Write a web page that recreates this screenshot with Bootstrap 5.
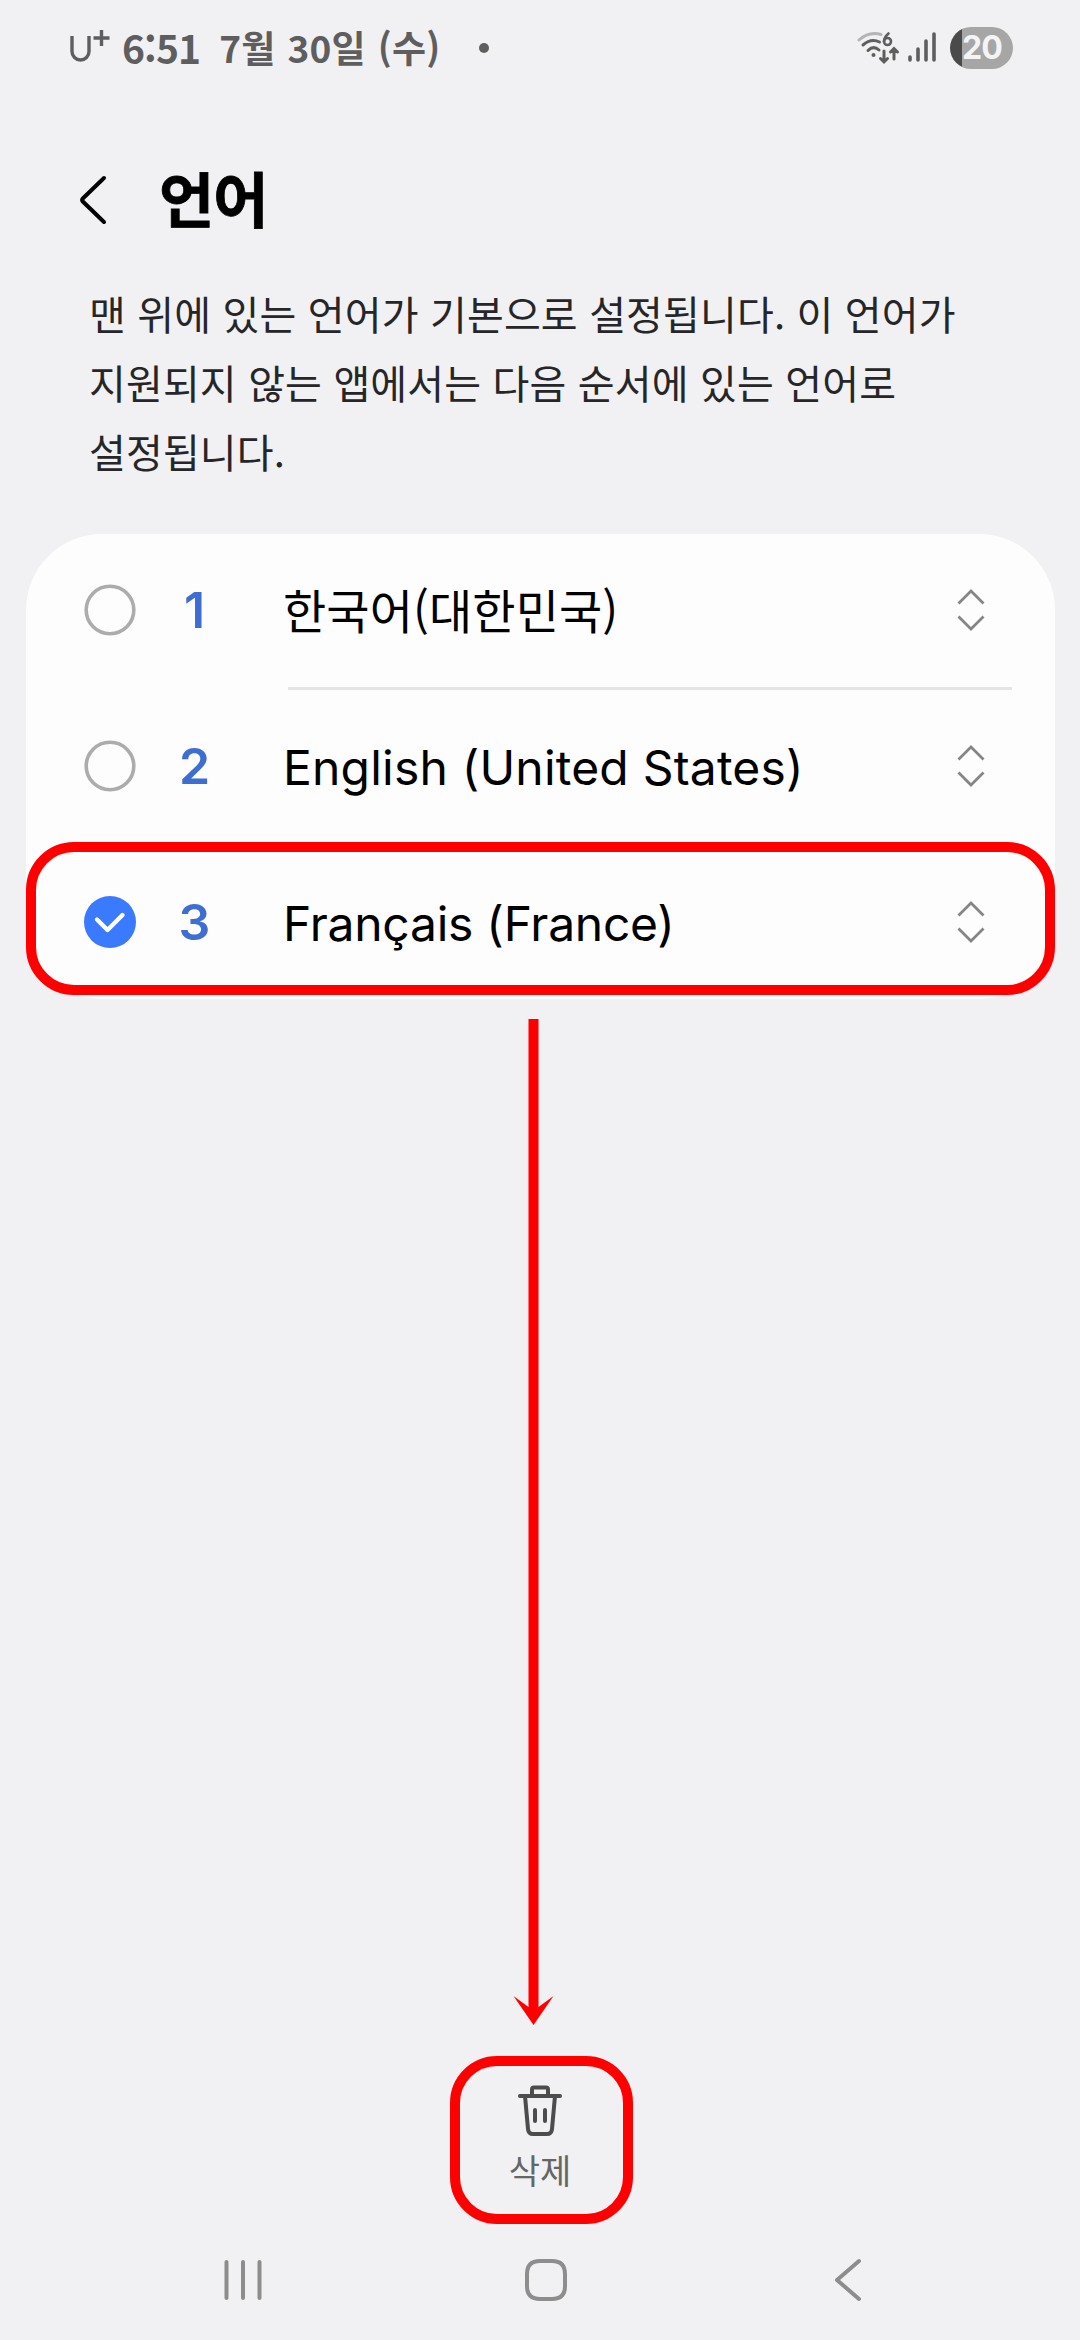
<!DOCTYPE html>
<html lang="ko">
<head>
<meta charset="utf-8">
<meta name="viewport" content="width=device-width, initial-scale=1">
<title>언어</title>
<link rel="stylesheet" href="https://cdn.jsdelivr.net/npm/bootstrap@5.3.0/dist/css/bootstrap.min.css">
<script src="https://cdn.jsdelivr.net/npm/bootstrap@5.3.0/dist/js/bootstrap.bundle.min.js"></script>
<style>
body{background:#f1f1f3;color:#000;font-family:"Noto Sans CJK KR",sans-serif;}
.screen{width:1080px;height:2340px;overflow:hidden;}
.statusbar{height:96px;padding:0 67px 0 68px;color:#5e5e5f;font-weight:700;font-size:37px;line-height:92px;}
.clock{margin-left:10px;font-size:39px;letter-spacing:-.9px;white-space:pre;padding-bottom:2px;}
.today{margin-left:19px;letter-spacing:.2px;word-spacing:1.5px;white-space:pre;padding-bottom:2px;}
.notif{width:10px;height:10px;background:#5e5e5f;margin-left:39px;}
.battery{width:63px;height:42px;margin-left:13px;border-radius:21px;background:linear-gradient(90deg,#4a4a4b 12px,#a6a6a7 12px);color:#f4f4f5;font:700 32px/42px Inter,sans-serif;padding-left:12px;letter-spacing:-1px;}
.appbar{height:208px;padding:0 78px;}
.appbar h1{font-size:60px;font-weight:700;line-height:80px;margin:0 0 6px 49px;letter-spacing:-1px;-webkit-text-stroke:.8px #000;}
.intro{color:#262628;font-size:40px;line-height:69px;letter-spacing:.15px;word-spacing:0;margin:-25px 80px 0 89px;}
.langs{margin:48px 25px 0 26px;height:465px;border-radius:76px;background:#fdfdfe;--bs-list-group-bg:transparent;}
.langs .list-group-item{height:156px;flex-shrink:0;padding:0 70px 4px 58px;border:0;color:#000;background:transparent;}
.pick{width:52px;height:52px;flex:none;}
.rank{width:61px;margin-left:28px;text-align:center;color:#3f6ed3;font:600 50px/60px Inter,sans-serif;}
.lname{margin-left:58px;font-size:47px;line-height:70px;padding-bottom:2px;letter-spacing:.1px;}
.latin{font-family:Inter,"Noto Sans CJK KR",sans-serif;font-size:48px;padding:3px 0 0;letter-spacing:.2px;}
.latin-tight{letter-spacing:-.25px;}
.rule{height:3px;margin:-3px 43px 0 262px;background:#e5e5e7;flex-shrink:0;}
.ring{border:10px solid #fe0000;border-radius:48px;pointer-events:none;}
.ring-row{left:26px;top:842px;width:1029px;height:153px;}
.arrow{left:513px;top:1019px;}
.delbox{width:183px;height:168px;margin-left:450px;border-radius:47px;color:#666;padding:18px 3px 0 0;font-size:34px;line-height:40px;}
.delbox span{margin-top:12px;}
.spacer{height:1057px;}
.navkeys{height:112px;padding:0 217px 0 222px;}
.home-key{margin-right:5px;}
</style>
</head>
<body>
<div class="screen position-relative d-flex flex-column">
  <header class="statusbar d-flex align-items-center flex-shrink-0">
    <svg width="44" height="40" viewBox="0 0 44 40" fill="none" stroke="#5e5e5f" stroke-width="3.4"><path d="M4 8v15.500a8.500 8.500 0 0 0 17 0V8"/><path d="M25.500 10h16M33.500 2v16"/></svg>
    <span class="clock">6:51</span><span class="today">7월 30일 (수)</span>
    <span class="notif rounded-circle"></span>
    <svg class="ms-auto" width="82" height="36" viewBox="0 0 82 36" fill="none" stroke="#5e5e5f" stroke-width="3" stroke-linecap="round">
      <path d="M4 10Q14 1 26 4.500" stroke="#b4b4b5"/><path d="M8 15Q16 8 24.500 12M13 20.500Q18.500 15 24 20"/><circle cx="18.500" cy="25" r="2" fill="#5e5e5f" stroke="none"/>
      <path stroke-width="2.600" d="M33.500 3.500Q29 7.500 29 11.500"/><circle stroke-width="2.600" cx="32.500" cy="11.500" r="3.500"/>
      <path d="M29 21v10.500M25.500 28.500l3.500 3.500 3.500-3.500M39 29v-10.500M35.500 22l3.500-3.500 3.500 3.500"/>
      <path stroke-width="3.600" d="M55 27v3M63 19v11M71 11v19M79 4v26"/>
    </svg>
    <span class="battery">20</span>
  </header>
  <div class="appbar d-flex align-items-center flex-shrink-0">
    <svg width="32" height="52" viewBox="0 0 32 52" fill="none" stroke="#000" stroke-width="4" stroke-linecap="round" stroke-linejoin="round"><path d="M26 4 4.800 24.500q-1.500 1.500 0 3L26 48"/></svg>
    <h1>언어</h1>
  </div>
  <p class="intro">맨 위에 있는 언어가 기본으로 설정됩니다. 이 언어가<br>지원되지 않는 앱에서는 다음 순서에 있는 언어로<br>설정됩니다.</p>
  <main class="langs list-group flex-shrink-0">
    <div class="list-group-item d-flex align-items-center">
      <svg class="pick" viewBox="0 0 52 52"><circle cx="26" cy="26" r="23.800" fill="none" stroke="#acacad" stroke-width="3.600"/></svg>
      <span class="rank">1</span><span class="lname">한국어(대한민국)</span>
      <svg class="ms-auto" width="28" height="42" viewBox="0 0 28 42" fill="none" stroke="#858586" stroke-width="2.800"><path d="M1.500 14.500 14 2l12.500 12.500M1.500 27.500 14 40l12.500-12.500"/></svg>
    </div>
    <div class="rule"></div>
    <div class="list-group-item d-flex align-items-center">
      <svg class="pick" viewBox="0 0 52 52"><circle cx="26" cy="26" r="23.800" fill="none" stroke="#acacad" stroke-width="3.600"/></svg>
      <span class="rank">2</span><span class="lname latin">English (United States)</span>
      <svg class="ms-auto" width="28" height="42" viewBox="0 0 28 42" fill="none" stroke="#858586" stroke-width="2.800"><path d="M1.500 14.500 14 2l12.500 12.500M1.500 27.500 14 40l12.500-12.500"/></svg>
    </div>
    <div class="list-group-item d-flex align-items-center">
      <svg class="pick" viewBox="0 0 52 52"><circle cx="26" cy="26" r="26" fill="#397aff"/><path d="M13 23.500 23.500 34 38.500 19" fill="none" stroke="#fff" stroke-width="4.400" stroke-linecap="round" stroke-linejoin="round"/></svg>
      <span class="rank">3</span><span class="lname latin latin-tight">Français (France)</span>
      <svg class="ms-auto" width="28" height="42" viewBox="0 0 28 42" fill="none" stroke="#858586" stroke-width="2.800"><path d="M1.500 14.500 14 2l12.500 12.500M1.500 27.500 14 40l12.500-12.500"/></svg>
    </div>
  </main>
  <div class="spacer flex-shrink-0"></div>
  <div class="delbox ring d-flex flex-column align-items-center flex-shrink-0">
    <svg width="46" height="54" viewBox="0 0 46 54" fill="none" stroke="#4c4c4d" stroke-width="4" stroke-linecap="round" stroke-linejoin="round"><path d="M3 12h40M15 12V5.500q0-2 2-2h12q2 0 2 2V12M8 12l3 33q.5 5 5 5h14q4.500 0 5-5l3-33M18 26v11M28 26v11"/></svg>
    <span>삭제</span>
  </div>
  <nav class="navkeys d-flex justify-content-between align-items-center flex-shrink-0">
    <svg width="42" height="44" viewBox="0 0 42 44" stroke="#8d8d8e" stroke-width="4" stroke-linecap="round"><path d="M4.500 4v36M21 4v36M37.500 4v36"/></svg>
    <svg class="home-key" width="44" height="44" viewBox="0 0 44 44" fill="none" stroke="#8d8d8e" stroke-width="4"><path d="M16 3h12q13 0 13 13v12q0 13-13 13H16Q3 41 3 28V16Q3 3 16 3z"/></svg>
    <svg width="30" height="44" viewBox="0 0 30 44" fill="none" stroke="#8d8d8e" stroke-width="4" stroke-linecap="round" stroke-linejoin="round"><path d="M26 3 4 22l22 19"/></svg>
  </nav>
  <div class="ring ring-row position-absolute"></div>
  <svg class="arrow position-absolute" width="41" height="1007" viewBox="0 0 41 1007" fill="#fe0000"><path d="M15.500 0h10v988L40.500 977 20.500 1006 .5 977l15 11z"/></svg>
</div>
</body>
</html>
